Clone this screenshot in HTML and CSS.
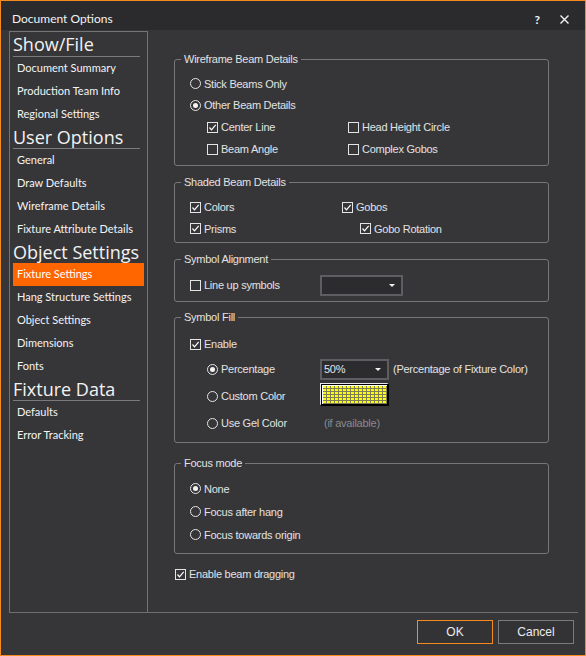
FILE: index.html
```html
<!DOCTYPE html>
<html>
<head>
<meta charset="utf-8">
<title>Document Options</title>
<link rel="stylesheet" href="styles.css">
</head>
<body>
<div class="window">
  <div class="titlebar">
    <span class="title">Document Options</span>
    <span class="tb-help">?</span>
    <svg class="tb-close" width="9" height="9" viewBox="0 0 9 9"><path d="M0.5 0.5 L8.5 8.5 M8.5 0.5 L0.5 8.5"/></svg>
  </div>
  <div class="main">
    <nav class="sidebar">
      <div class="nav-head first">Show/File</div>
      <div class="nav-item">Document Summary</div>
      <div class="nav-item">Production Team Info</div>
      <div class="nav-item">Regional Settings</div>
      <div class="nav-head">User Options</div>
      <div class="nav-item">General</div>
      <div class="nav-item">Draw Defaults</div>
      <div class="nav-item">Wireframe Details</div>
      <div class="nav-item">Fixture Attribute Details</div>
      <div class="nav-head norule">Object Settings</div>
      <div class="nav-item selected">Fixture Settings</div>
      <div class="nav-item">Hang Structure Settings</div>
      <div class="nav-item">Object Settings</div>
      <div class="nav-item">Dimensions</div>
      <div class="nav-item">Fonts</div>
      <div class="nav-head">Fixture Data</div>
      <div class="nav-item">Defaults</div>
      <div class="nav-item">Error Tracking</div>
    </nav>
    <section class="pane">
      <div class="group g1">
        <div class="group-title">Wireframe Beam Details</div>
        <div class="row h21">
          <span class="ctl"><svg class="rb" width="11" height="11" viewBox="0 0 11 11"><circle cx="5.5" cy="5.5" r="5"/></svg>Stick Beams Only</span>
        </div>
        <div class="row h22">
          <span class="ctl"><svg class="rb" width="11" height="11" viewBox="0 0 11 11"><circle cx="5.5" cy="5.5" r="5"/><circle class="dot" cx="5.5" cy="5.5" r="2.5"/></svg>Other Beam Details</span>
        </div>
        <div class="row sub h22">
          <span class="ctl w141"><svg class="cb" width="11" height="11" viewBox="0 0 11 11"><rect x="0.5" y="0.5" width="10" height="10"/><path d="M2.5 5.5 L4.5 7.8 L8.7 2.8"/></svg>Center Line</span>
          <span class="ctl"><svg class="cb" width="11" height="11" viewBox="0 0 11 11"><rect x="0.5" y="0.5" width="10" height="10"/></svg>Head Height Circle</span>
        </div>
        <div class="row sub h22">
          <span class="ctl w141"><svg class="cb" width="11" height="11" viewBox="0 0 11 11"><rect x="0.5" y="0.5" width="10" height="10"/></svg>Beam Angle</span>
          <span class="ctl"><svg class="cb" width="11" height="11" viewBox="0 0 11 11"><rect x="0.5" y="0.5" width="10" height="10"/></svg>Complex Gobos</span>
        </div>
      </div>

      <div class="group g2">
        <div class="group-title">Shaded Beam Details</div>
        <div class="row h22">
          <span class="ctl w152"><svg class="cb" width="11" height="11" viewBox="0 0 11 11"><rect x="0.5" y="0.5" width="10" height="10"/><path d="M2.5 5.5 L4.5 7.8 L8.7 2.8"/></svg>Colors</span>
          <span class="ctl"><svg class="cb" width="11" height="11" viewBox="0 0 11 11"><rect x="0.5" y="0.5" width="10" height="10"/><path d="M2.5 5.5 L4.5 7.8 L8.7 2.8"/></svg>Gobos</span>
        </div>
        <div class="row h21">
          <span class="ctl w170"><svg class="cb" width="11" height="11" viewBox="0 0 11 11"><rect x="0.5" y="0.5" width="10" height="10"/><path d="M2.5 5.5 L4.5 7.8 L8.7 2.8"/></svg>Prisms</span>
          <span class="ctl"><svg class="cb" width="11" height="11" viewBox="0 0 11 11"><rect x="0.5" y="0.5" width="10" height="10"/><path d="M2.5 5.5 L4.5 7.8 L8.7 2.8"/></svg>Gobo Rotation</span>
        </div>
      </div>

      <div class="group g3">
        <div class="group-title">Symbol Alignment</div>
        <div class="row h22">
          <span class="ctl w130"><svg class="cb" width="11" height="11" viewBox="0 0 11 11"><rect x="0.5" y="0.5" width="10" height="10"/></svg>Line up symbols</span>
          <div class="combo wide"><span class="combo-text"></span><span class="arrow"></span></div>
        </div>
      </div>

      <div class="group g4">
        <div class="group-title">Symbol Fill</div>
        <div class="row h22">
          <span class="ctl"><svg class="cb" width="11" height="11" viewBox="0 0 11 11"><rect x="0.5" y="0.5" width="10" height="10"/><path d="M2.5 5.5 L4.5 7.8 L8.7 2.8"/></svg>Enable</span>
        </div>
        <div class="row sub h28">
          <span class="ctl w113"><svg class="rb" width="11" height="11" viewBox="0 0 11 11"><circle cx="5.5" cy="5.5" r="5"/><circle class="dot" cx="5.5" cy="5.5" r="2.5"/></svg>Percentage</span>
          <div class="combo narrow"><span class="combo-text">50%</span><span class="arrow"></span></div>
          <span class="note">(Percentage of Fixture Color)</span>
        </div>
        <div class="row sub h26">
          <span class="ctl w113"><svg class="rb" width="11" height="11" viewBox="0 0 11 11"><circle cx="5.5" cy="5.5" r="5"/></svg>Custom Color</span>
          <div class="swatch"><div class="swatch-grid"></div></div>
        </div>
        <div class="row sub h28">
          <span class="ctl w117"><svg class="rb" width="11" height="11" viewBox="0 0 11 11"><circle cx="5.5" cy="5.5" r="5"/></svg>Use Gel Color</span>
          <span class="muted">(if available)</span>
        </div>
      </div>

      <div class="group g5">
        <div class="group-title">Focus mode</div>
        <div class="row h23">
          <span class="ctl"><svg class="rb" width="11" height="11" viewBox="0 0 11 11"><circle cx="5.5" cy="5.5" r="5"/><circle class="dot" cx="5.5" cy="5.5" r="2.5"/></svg>None</span>
        </div>
        <div class="row h23">
          <span class="ctl"><svg class="rb" width="11" height="11" viewBox="0 0 11 11"><circle cx="5.5" cy="5.5" r="5"/></svg>Focus after hang</span>
        </div>
        <div class="row h23">
          <span class="ctl"><svg class="rb" width="11" height="11" viewBox="0 0 11 11"><circle cx="5.5" cy="5.5" r="5"/></svg>Focus towards origin</span>
        </div>
      </div>

      <div class="row standalone h22">
        <span class="ctl"><svg class="cb" width="11" height="11" viewBox="0 0 11 11"><rect x="0.5" y="0.5" width="10" height="10"/><path d="M2.5 5.5 L4.5 7.8 L8.7 2.8"/></svg>Enable beam dragging</span>
      </div>
    </section>
  </div>
  <div class="footer">
    <button class="btn ok">OK</button>
    <button class="btn">Cancel</button>
  </div>
</div>
</body>
</html>
```

FILE: styles.css
```css
* { box-sizing: border-box; }

html, body {
  margin: 0;
  padding: 0;
  background: #363639;
}

.window {
  width: 586px;
  height: 656px;
  border: 1px solid #f58a1f;
  background: #363639;
  display: flex;
  flex-direction: column;
  overflow: hidden;
}

/* Title bar */
.titlebar {
  height: 29px;
  flex: none;
  background: #2b2b2e;
  display: flex;
  align-items: center;
  padding: 6px 16px 0 11px;
  color: #f2f2f2;
  font-family: Lato, "Open Sans", sans-serif;
}

.title {
  font-size: 12px;
}

.tb-help {
  margin-left: auto;
  font-size: 12px;
  font-weight: 700;
  margin-right: 20px;
  margin-top: 1px;
}

.tb-close {
  display: block;
  margin-top: 1px;
}

.tb-close path {
  stroke: #f2f2f2;
  stroke-width: 1.4;
  fill: none;
}

/* Main area */
.main {
  flex: none;
  height: 582px;
  display: flex;
  padding-left: 8px;
}

.sidebar {
  width: 139px;
  flex: none;
  margin-top: 1px;
  border: 1px solid #747477;
  border-bottom: none;
  padding: 0 0 0 3px;
  display: flex;
  flex-direction: column;
}

.nav-head {
  font-family: "Open Sans", sans-serif;
  font-size: 18px;
  line-height: 22px;
  height: 23px;
  color: #f2f2f2;
  border-bottom: 1px solid #7a7a7d;
  margin-right: 7px;
  white-space: nowrap;
}

.nav-head.first {
  margin-top: 1px;
  height: 24px;
  line-height: 23px;
}

.nav-head.norule {
  border-bottom-color: transparent;
  height: 22px;
}

.nav-item {
  font-family: Lato, "Open Sans", sans-serif;
  font-size: 11px;
  line-height: 22px;
  height: 23px;
  color: #f4f4f4;
  padding-left: 4px;
  margin-right: 3px;
  white-space: nowrap;
}

.nav-item.selected {
  background: #ff6600;
  color: #ffffff;
}

/* Right pane */
.pane {
  flex: 1;
  padding-left: 26px;
  font-family: "Liberation Sans", Arial, sans-serif;
  font-size: 11px;
  letter-spacing: -0.25px;
  color: #e2e2e2;
}

.group {
  width: 375px;
  border: 1px solid #77777a;
  border-radius: 3px;
}

.group-title {
  display: table;
  margin: -8px 0 0 6px;
  padding: 0 3px;
  height: 14px;
  line-height: 14px;
  background: #363639;
  color: #e2e2e2;
}

.g1 { margin-top: 29px; padding-bottom: 5px; }
.g1 .group-title { margin-bottom: 7px; }
.g2 { margin-top: 16px; padding-bottom: 3px; }
.g2 .group-title { margin-bottom: 7px; }
.g3 { margin-top: 16px; padding-bottom: 5px; }
.g3 .group-title { margin-bottom: 8px; }
.g4 { margin-top: 15px; padding-bottom: 5px; }
.g4 .group-title { margin-bottom: 9px; }
.g5 { margin-top: 20px; padding-bottom: 7px; }
.g5 .group-title { margin-bottom: 7px; }

.row {
  display: flex;
  align-items: center;
  padding-left: 15px;
  white-space: nowrap;
}

.row.sub { padding-left: 32px; }
.row.standalone { padding-left: 1px; margin-top: 9px; }

.h21 { height: 21px; }
.h22 { height: 22px; }
.h23 { height: 23px; }
.h26 { height: 26px; }
.h28 { height: 28px; }

.ctl {
  display: flex;
  align-items: center;
  gap: 3px;
}

.w113 { width: 113px; }
.w117 { width: 117px; }
.w130 { width: 130px; }
.w141 { width: 141px; }
.w152 { width: 152px; }
.w170 { width: 170px; }

.ctl svg { display: block; flex: none; }

.cb rect {
  fill: none;
  stroke: #e4e4e4;
  stroke-width: 1;
}

.cb path {
  fill: none;
  stroke: #ffffff;
  stroke-width: 1.2;
}

.rb circle {
  fill: none;
  stroke: #e4e4e4;
  stroke-width: 1;
}

.rb circle.dot {
  fill: #f4f4f4;
  stroke: none;
}

/* Combo boxes */
.combo {
  height: 21px;
  border: 2px solid #5e5e62;
  background: #2c2c2f;
  display: flex;
  align-items: center;
}

.combo.wide { width: 83px; }
.combo.narrow { width: 69px; }

.combo-text {
  flex: 1;
  padding-left: 2px;
  color: #e6e6e6;
}

.arrow {
  width: 0;
  height: 0;
  border-left: 3px solid transparent;
  border-right: 3px solid transparent;
  border-top: 3px solid #f0f0f0;
  margin-right: 6px;
}

.note {
  margin-left: 4px;
  color: #e2e2e2;
}

.muted {
  color: #8a8a8d;
}

/* Colour swatch */
.swatch {
  width: 69px;
  height: 23px;
  margin-bottom: 3px;
  border-top: 1px solid #e8e8e8;
  border-left: 1px solid #e8e8e8;
  border-right: 2px solid #000;
  border-bottom: 2px solid #000;
  background: #000;
  padding: 1px 0 0 1px;
}

.swatch-grid {
  width: 100%;
  height: 100%;
  border-top: 1px solid #fff;
  border-left: 1px solid #fff;
  background-color: #ffff00;
  background-image:
    repeating-linear-gradient(90deg, transparent 0 3px, #7d7d5a 3px 4px),
    repeating-linear-gradient(180deg, transparent 0 2px, #7d7d5a 2px 3px);
}

/* Footer */
.footer {
  flex: 1;
  margin: 0 7px 0 8px;
  border-top: 1px solid #6e6e71;
  display: flex;
  justify-content: flex-end;
  align-items: flex-start;
  gap: 5px;
  padding: 7px 4px 0 0;
}

.btn {
  width: 76px;
  height: 24px;
  margin: 0;
  padding: 0;
  background: #333336;
  border: 1px solid #7b7b7e;
  color: #ececec;
  font-family: "Liberation Sans", Arial, sans-serif;
  font-size: 12px;
}

.btn.ok {
  border-color: #f58a1f;
}
```
